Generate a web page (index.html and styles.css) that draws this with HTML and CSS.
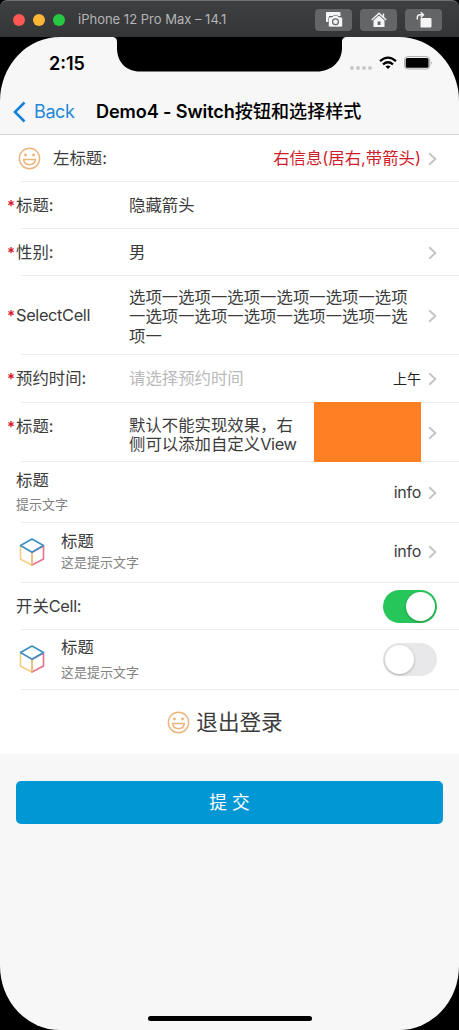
FILE: index.html
```html
<!DOCTYPE html>
<html lang="zh-CN">
<head>
<meta charset="utf-8">
<title>Demo4 - Switch按钮和选择样式</title>
<link rel="stylesheet" href="styles.css">
</head>
<body>
<svg class="symbols" aria-hidden="true">
  <symbol id="chevron" viewBox="0 0 9 14"><path d="M1.2 1.2 7.3 7l-6.1 5.8" fill="none" stroke="#c5c5c7" stroke-width="2"/></symbol>
  <symbol id="smile" viewBox="0 0 24 24"><g fill="none" stroke="#ecb57c" stroke-width="1.5"><circle cx="12" cy="12" r="10.6"/><path d="M5.8 13h12.4c-.4 3.4-2.9 5.5-6.2 5.5S6.200 16.400 5.800 13z" stroke-linejoin="round"/></g><g fill="#ecb57c"><circle cx="7.800" cy="8.300" r="1.500"/><circle cx="16.200" cy="8.300" r="1.500"/></g></symbol>
  <symbol id="cube" viewBox="0 0 26 28"><g fill="none" stroke-width="1.600" stroke-linejoin="round" stroke-linecap="round"><path d="M1.500 8v13.300L13 27V14.300" stroke="#f5ce80"/><path d="M13 27l11.500-6V8L13 14.300" stroke="#e5728a"/><path d="M13 15v12" stroke="#f0b77e"/><path d="M1.500 7.500 13 1l11.500 6.500L13 14.300z" stroke="#3d8fc4"/></g></symbol>
</svg>

<header class="titlebar">
  <span class="light red"></span><span class="light yellow"></span><span class="light green"></span>
  <span class="device">iPhone 12 Pro Max – 14.1</span>
  <span class="tool"><svg width="18" height="18" viewBox="0 0 18 18"><path d="M2 1h12.500q1 0 1 1v3H4v6H2q-1 0-1-1V2q0-1 1-1z" fill="#f5f5f5"/><path d="M5 6h2.300l1.200-1.500h4L13.700 6H16q1.500 0 1.500 1.500v7q0 1.500-1.500 1.500H5q-1.500 0-1.500-1.500v-7Q3.500 6 5 6z" fill="#f5f5f5" stroke="#646566" stroke-width=".6"/><circle cx="10.500" cy="10.700" r="2.900" fill="none" stroke="#646566" stroke-width="1.200"/></svg></span>
  <span class="tool"><svg width="18" height="18" viewBox="0 0 18 18"><path d="M1.800 9 9 2.200 16.200 9M13.500 6V2.500" fill="none" stroke="#f5f5f5" stroke-width="1.400"/><path d="M9 4.500 14.500 9.500V16h-11V9.500z" fill="#f5f5f5"/><path d="M7.700 10.500h2.800V14H7.700z" fill="#646566"/></svg></span>
  <span class="tool"><svg width="18" height="18" viewBox="0 0 18 18"><rect x="5.500" y="7" width="11" height="9.500" rx="1" fill="#f5f5f5"/><path d="M2.300 8.500V6.500q0-2.700 2.700-2.700H8M5.800 1.200 8.500 3.800 5.800 6.400" fill="none" stroke="#f5f5f5" stroke-width="1.400"/></svg></span>
</header>

<main class="screen">
  <svg class="notch" width="238" height="36" viewBox="0 0 238 36"><path d="M0 0C5 0 6 2 6 5v6C6 25 15 34.500 29 34.500H206C220 34.500 231 25 231 11V5c0-3 1-5 6-5z" fill="#000"/></svg>
  <div class="status">
    <span class="time">2:15</span>
    <span class="dots"><i></i><i></i><i></i><i></i></span>
    <svg width="18" height="14" viewBox="0 0 18 14"><g fill="none" stroke="#000" stroke-width="2.300"><path d="M1 5.100q8-7 16 0"/><path d="M4 8.400q5-4.300 10 0"/></g><path d="M6.500 10.400q2.500-1.900 5 0L9 13z"/></svg>
    <svg class="battery" width="29" height="14" viewBox="0 0 29 14"><rect x=".6" y=".6" width="25" height="12.400" rx="3" fill="none" stroke="#aaa"/><rect x="1.700" y="1.900" width="22.800" height="9.800" rx="1.500"/><path d="M26.800 5q1.800 1.800 0 4z" fill="#999"/></svg>
  </div>
  <nav class="nav">
    <svg width="13" height="22" viewBox="0 0 13 22"><path d="M11.500 1.500 2 11l9.500 9.500" fill="none" stroke="#1582d8" stroke-width="2.600"/></svg>
    <span class="back">Back</span>
    <h1>Demo4 - Switch<span>按钮和选择样式</span></h1>
  </nav>

  <section class="list">
    <div class="row icon-row">
      <svg class="smile" width="23" height="23"><use href="#smile"/></svg>
      <span class="label">左标题:</span>
      <span class="right danger">右信息(居右,带箭头)</span>
      <svg class="chevron"><use href="#chevron"/></svg>
    </div>
    <div class="row form">
      <b class="star">*</b><span class="label">标题:</span><span class="value">隐藏箭头</span>
    </div>
    <div class="row form">
      <b class="star">*</b><span class="label">性别:</span><span class="value">男</span>
      <svg class="chevron"><use href="#chevron"/></svg>
    </div>
    <div class="row form tall">
      <b class="star">*</b><span class="label latin">SelectCell</span>
      <span class="value multi">选项一选项一选项一选项一选项一选项<br>一选项一选项一选项一选项一选项一选<br>项一</span>
      <svg class="chevron"><use href="#chevron"/></svg>
    </div>
    <div class="row form date">
      <b class="star">*</b><span class="label">预约时间:</span><span class="value placeholder">请选择预约时间</span>
      <span class="right period">上午</span>
      <svg class="chevron"><use href="#chevron"/></svg>
    </div>
    <div class="row form custom">
      <b class="star">*</b><span class="label">标题:</span>
      <span class="value multi">默认不能实现效果，右<br>侧可以添加自定义<span class="latin">View</span></span>
      <span class="swatch"></span>
      <svg class="chevron"><use href="#chevron"/></svg>
    </div>
    <div class="row detail">
      <div class="stack loose"><span>标题</span><small>提示文字</small></div>
      <span class="right info">info</span>
      <svg class="chevron"><use href="#chevron"/></svg>
    </div>
    <div class="row detail short">
      <svg class="cube" width="26" height="28"><use href="#cube"/></svg>
      <div class="stack"><span>标题</span><small>这是提示文字</small></div>
      <span class="right info">info</span>
      <svg class="chevron"><use href="#chevron"/></svg>
    </div>
    <div class="row plain">
      <span>开关<span class="latin">Cell:</span></span>
      <span class="switch on"><i></i></span>
    </div>
    <div class="row detail short">
      <svg class="cube" width="26" height="28"><use href="#cube"/></svg>
      <div class="stack loose"><span>标题</span><small>这是提示文字</small></div>
      <span class="switch"><i></i></span>
    </div>
    <div class="logout">
      <svg width="23" height="23"><use href="#smile"/></svg>
      <span>退出登录</span>
    </div>
  </section>
  <button class="submit">提 交</button>
  <div class="home"></div>
</main>
</body>
</html>
```
FILE: styles.css
```css
* { box-sizing: border-box; }
body {
  margin: 0;
  width: 459px;
  height: 1030px;
  overflow: hidden;
  background: #000;
  color: #3c3c3c;
  font: 16.4px/19.3px Inter, "Noto Sans CJK SC", sans-serif;
  white-space: nowrap;
}
svg { display: block; flex: none; }
.symbols { position: absolute; width: 0; height: 0; }

.titlebar {
  display: flex;
  align-items: center;
  height: 37px;
  padding: 1px 17px 0 13px;
  border-top: 1px solid #707173;
  border-radius: 7px 7px 0 0;
  background: linear-gradient(#3e3f40, #343536);
}
.light { width: 12px; height: 12px; margin-right: 8px; border-radius: 50%; }
.red { background: #fc5753; }
.yellow { background: #fdb536; }
.green { background: #27c840; }
.device { margin: 0 auto 0 5px; color: #b4b5b6; font-size: 13px; }
.tool {
  display: flex;
  align-items: center;
  justify-content: center;
  width: 37px;
  height: 22px;
  margin-left: 8px;
  border-radius: 4px;
  background: #646566;
}

.screen {
  position: relative;
  display: flex;
  flex-direction: column;
  height: 993px;
  overflow: hidden;
  border-radius: 60px / 64px;
  background: #f7f7f7;
}
.notch { position: absolute; top: 0; left: 111px; }
.status {
  display: flex;
  align-items: center;
  height: 52px;
  padding: 0 26px 0 49px;
  color: #000;
}
.time { margin-right: auto; padding-top: 1px; font-size: 18px; font-weight: 600; letter-spacing: 0; }
.dots { display: flex; gap: 2px; margin: 10px 7px 0 0; }
.dots i { width: 4px; height: 4px; border-radius: 50%; background: #c9c9c9; }
.battery { margin-left: 7px; }
.nav {
  display: flex;
  align-items: center;
  height: 46px;
  padding-left: 13px;
  border-bottom: 1px solid #d5d5d6;
}
.back { width: 40px; margin-left: 8px; color: #2488d8; font-size: 18px; letter-spacing: -.4px; }
h1 { margin: 0 0 0 22px; color: #000; font-size: 18.1px; font-weight: 600; letter-spacing: -.1px; }
h1 span { font-weight: 500; letter-spacing: 0; }

.list { height: 619px; background: #fff; }
.row {
  position: relative;
  display: flex;
  align-items: center;
  height: 47px;
  padding: 0 22px 0 16px;
}
.row::after {
  position: absolute;
  right: 0;
  bottom: 0;
  left: 21px;
  height: 1px;
  background: #ececec;
  content: "";
}
.latin { letter-spacing: -.38px; }
.chevron { width: 9px; height: 14px; margin-left: 7px; }
.right { margin-left: auto; font-size: 16px; }
.info { letter-spacing: -.25px; }
.icon-row { padding-left: 18px; }
.icon-row .label { margin-left: 12px; }
.danger { color: #cf1d2b; font-size: 16.4px; }
.form { padding-left: 7px; }
.form .chevron { margin-left: auto; }
.form .right + .chevron { margin-left: 7px; }
.star { width: 9px; color: #d4142a; font-size: 15px; font-weight: 600; }
.form .label { width: 113px; }
.tall { height: 79px; }
.tall .value { margin-top: 3px; }
.date { height: 48px; }
.placeholder { color: #bababa; }
.period { color: #222; font-size: 14px; }
.custom { height: 59px; }
.custom .star, .custom .label { margin-bottom: 12px; }
.custom .value { margin-top: 5px; }
.swatch { align-self: stretch; width: 107px; margin: -1px 0 0 auto; z-index: 1; background: #ff7f24; }
.custom .swatch + .chevron { margin-left: 7px; }
.detail { height: 61px; }
.short { height: 60px; padding-bottom: 2px; }
.stack { display: flex; flex-direction: column; gap: 2px; }
.stack small { color: #828282; font-size: 13px; }
.loose { gap: 5px; }
.short .loose { margin-top: 2px; }
.cube { margin: 0 16px 0 3px; }
.plain > span:first-child { margin-right: auto; }
.switch {
  width: 54px;
  height: 33px;
  margin-left: auto;
  padding: 2px;
  border-radius: 17px;
  background: #e8e8ea;
}
.switch i {
  display: block;
  width: 29px;
  height: 29px;
  border-radius: 50%;
  background: #fff;
  box-shadow: 0 1px 3px #0004;
}
.on { background: #27c65a; }
.on i { margin-left: auto; }
.logout {
  display: flex;
  align-items: center;
  justify-content: center;
  gap: 6px;
  height: 64px;
  padding-right: 9px;
  font-size: 21.600px;
  line-height: 26px;
}
.submit {
  flex: none;
  height: 43px;
  margin: 27px 16px 0;
  border: 0;
  border-radius: 5px;
  background: #0097d4;
  color: #fff;
  font: 17.700px/24px Inter, "Noto Sans CJK SC", sans-serif;
}
.home { width: 164px; height: 5px; margin: auto auto 9px 148px; border-radius: 3px; background: #000; }
```
